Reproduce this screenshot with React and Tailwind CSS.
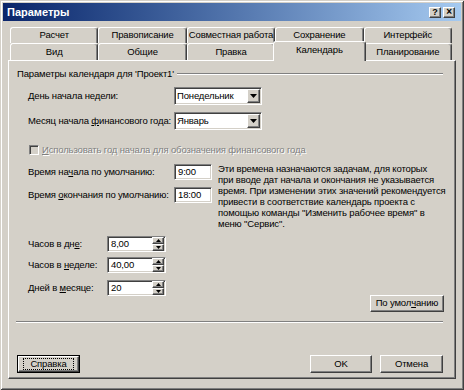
import React from "react";

const raised =
  "border border-t-white border-l-white border-r-[#404040] border-b-[#404040] shadow-[inset_-1px_-1px_0_#808080]";
const sunken =
  "border border-t-[#808080] border-l-[#808080] border-r-white border-b-white shadow-[inset_1px_1px_0_#404040,inset_-1px_-1px_0_#d4d0c8]";

function Tab({ label, selected }) {
  if (selected) {
    return (
      <div className="relative z-10 -mt-[2px] -mx-[2px] h-[20px] bg-[#d4d0c8] rounded-t-[3px] border-t border-l border-r border-t-white border-l-white border-r-[#404040] shadow-[inset_-1px_0_0_#808080] flex items-center justify-center pb-[2px] whitespace-nowrap">
        {label}
      </div>
    );
  }
  return (
    <div className="h-full rounded-t-[3px] border-t border-l border-r border-t-white border-l-white border-r-[#404040] shadow-[inset_-1px_0_0_#808080] flex items-center justify-center whitespace-nowrap">
      {label}
    </div>
  );
}

function Arrow({ up }) {
  return (
    <svg width="5" height="3" viewBox="0 0 5 3">
      <path d={up ? "M2.5 0L5 3H0z" : "M0 0h5L2.5 3z"} fill="#000" />
    </svg>
  );
}

function Combo({ value }) {
  return (
    <div className={`w-[88px] h-[18px] bg-white flex items-center ${sunken}`}>
      <span className="flex-1 pl-[2px] leading-none whitespace-nowrap">{value}</span>
      <div className={`w-[13px] h-[14px] mr-[1px] bg-[#d4d0c8] flex items-center justify-center ${raised}`}>
        <svg width="7" height="4" viewBox="0 0 7 4">
          <path d="M0 0h7L3.5 4z" fill="#000" />
        </svg>
      </div>
    </div>
  );
}

function Field({ value, w }) {
  return (
    <div className={`${w} h-[16px] bg-white flex items-center pl-[3px] leading-none ${sunken}`}>
      {value}
    </div>
  );
}

function Spin({ value }) {
  return (
    <div className={`w-[59px] h-[16px] bg-white flex items-center ${sunken}`}>
      <span className="flex-1 pl-[3px] leading-none">{value}</span>
      <div className="w-[12px] h-[14px] mr-[1px] flex flex-col">
        <div className={`flex-1 bg-[#d4d0c8] flex items-center justify-center ${raised}`}>
          <Arrow up />
        </div>
        <div className={`flex-1 bg-[#d4d0c8] flex items-center justify-center ${raised}`}>
          <Arrow />
        </div>
      </div>
    </div>
  );
}

function Button({ children, w, focused }) {
  if (focused) {
    return (
      <div className={`${w} h-[18px] border border-black`}>
        <div className={`h-full flex items-center justify-center ${raised}`}>
          <div className="border border-dotted border-black px-[6px] leading-[10px]">{children}</div>
        </div>
      </div>
    );
  }
  return (
    <div className={`${w} h-[18px] flex items-center justify-center ${raised}`}>
      {children}
    </div>
  );
}

export default function App() {
  return (
    <div className="w-[464px] h-[390px] bg-[#d4d0c8] p-[3px] flex flex-col text-[9.5px] tracking-[-0.15px] text-black font-['Liberation_Sans',Arial,sans-serif] shadow-[inset_1px_1px_0_#d4d0c8,inset_-1px_-1px_0_#404040,inset_2px_2px_0_#ffffff,inset_-2px_-2px_0_#808080]">
      {/* Title bar */}
      <div className="h-[18px] shrink-0 bg-linear-to-r from-[#0a246a] to-[#a6caf0] flex items-center justify-between pl-[4px] pr-[6px]">
        <span className="text-white font-bold text-[11px] tracking-normal leading-none">Параметры</span>
        <div className="flex gap-[2px]">
          <div className={`w-[12px] h-[11px] bg-[#d4d0c8] flex items-center justify-center text-[9px] font-bold leading-none ${raised}`}>?</div>
          <div className={`w-[12px] h-[11px] bg-[#d4d0c8] flex items-center justify-center text-[10px] font-bold leading-none ${raised}`}>×</div>
        </div>
      </div>

      {/* Tabs + panel */}
      <div className="mt-[6px] px-[5px] flex flex-col">
        <div className="ml-[2px] mr-[4px] flex flex-col">
          <div className="grid grid-cols-5 h-[16px]">
            <Tab label="Расчет" />
            <Tab label="Правописание" />
            <Tab label="Совместная работа" />
            <Tab label="Сохранение" />
            <Tab label="Интерфейс" />
          </div>
          <div className="grid grid-cols-5 h-[17px]">
            <Tab label="Вид" />
            <Tab label="Общие" />
            <Tab label="Правка" />
            <Tab label="Календарь" selected />
            <Tab label="Планирование" />
          </div>
        </div>

        <div className="h-[319px] border border-t-white border-l-white border-r-[#404040] border-b-[#404040] shadow-[inset_-1px_-1px_0_#808080] pl-[8px] pr-[12px] flex flex-col">
          {/* heading */}
          <div className="mt-[6px] h-[13px] flex items-center">
            <span className="leading-none whitespace-nowrap">Параметры календаря для 'Проект1'</span>
            <div className="flex-1 ml-[3px] h-[2px] border-t border-t-[#808080] border-b border-b-white" />
          </div>

          <div className="ml-[11px] flex flex-col">
            <div className="mt-[7px] h-[18px] flex items-center">
              <span className="w-[146px] leading-none whitespace-nowrap">День начала недели:</span>
              <Combo value="Понедельник" />
            </div>
            <div className="mt-[7px] h-[18px] flex items-center">
              <span className="w-[146px] leading-none whitespace-nowrap">
                Месяц начала <u>ф</u>инансового года:
              </span>
              <Combo value="Январь" />
            </div>
            <div className="mt-[13px] h-[13px] flex items-center">
              <div className={`w-[10px] h-[10px] ml-[1px] bg-[#d4d0c8] ${sunken}`} />
              <span className="ml-[3px] leading-none text-[#808080] [text-shadow:1px_1px_0_#ffffff] whitespace-nowrap">
                <u>И</u>спользовать год начала для обозначения финансового года
              </span>
            </div>

            <div className="mt-[7px] flex">
              <div className="flex flex-col">
                <div className="mt-[1px] h-[16px] flex items-center">
                  <span className="w-[146px] leading-none whitespace-nowrap">
                    Время на<u>ч</u>ала по умолчанию:
                  </span>
                  <Field value="9:00" w="w-[38px]" />
                </div>
                <div className="mt-[7px] h-[16px] flex items-center">
                  <span className="w-[146px] leading-none whitespace-nowrap">
                    Время <u>о</u>кончания по умолчанию:
                  </span>
                  <Field value="18:00" w="w-[38px]" />
                </div>
              </div>
              <div className="ml-[6px] flex flex-col leading-[11px] whitespace-nowrap">
                <span>Эти времена назначаются задачам, для которых</span>
                <span>при вводе дат начала и окончания не указывается</span>
                <span>время. При изменении этих значений рекомендуется</span>
                <span>привести в соответствие календарь проекта с</span>
                <span>помощью команды "Изменить рабочее время" в</span>
                <span>меню "Сервис".</span>
              </div>
            </div>

            <div className="mt-[7px] flex flex-col">
              <div className="h-[16px] flex items-center">
                <span className="w-[79px] leading-none whitespace-nowrap">
                  Часов в дн<u>е</u>:
                </span>
                <Spin value="8,00" />
              </div>
              <div className="mt-[5px] h-[16px] flex items-center">
                <span className="w-[79px] leading-none whitespace-nowrap">
                  Часов в <u>н</u>еделе:
                </span>
                <Spin value="40,00" />
              </div>
              <div className="mt-[7px] h-[16px] flex items-center">
                <span className="w-[79px] leading-none whitespace-nowrap">
                  Дней в <u>м</u>есяце:
                </span>
                <Spin value="20" />
              </div>
            </div>
          </div>

          <div className="-mt-[1px] flex justify-end">
            <div className={`w-[74px] h-[17px] mr-[-1px] flex items-center justify-center whitespace-nowrap ${raised}`}>
              По умол<u>ч</u>анию
            </div>
          </div>

          <div className="mt-[9px] ml-[-1px] h-[2px] border-t border-t-[#808080] border-b border-b-white" />

          <div className="mt-[32px] flex">
            <Button w="w-[63px]" focused>
              Справка
            </Button>
            <div className="flex-1" />
            <Button w="w-[62px]">OK</Button>
            <div className="w-[8px]" />
            <Button w="w-[63px]">Отмена</Button>
          </div>
        </div>
      </div>
    </div>
  );
}
